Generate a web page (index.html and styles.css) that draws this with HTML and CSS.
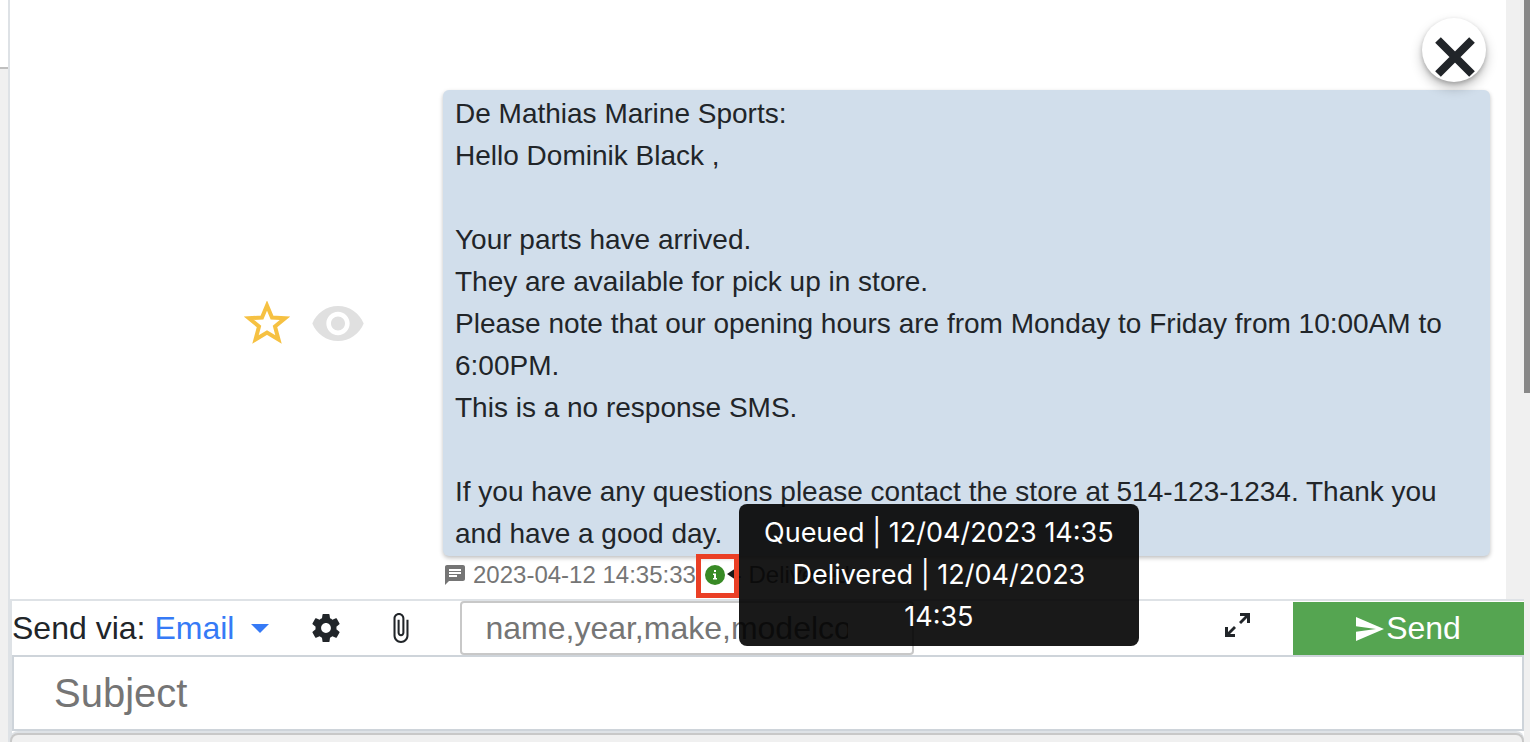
FILE: index.html
```html
<!doctype html>
<html lang="en">
<head>
  <meta charset="UTF-8">
  <meta name="viewport" content="width=device-width, initial-scale=1.0">
  <title>Messages</title>
  <link rel="stylesheet" href="styles.css">
</head>
<body>
  <div class="app">
    <aside class="rail">
      <div class="rail-top"></div>
    </aside>

    <main class="main">
      <section class="thread">
        <div class="messages">
          <div class="message">
            <div class="message-actions">
              <button class="icon-btn" type="button" aria-label="Star message">
                <svg class="icon-star" viewBox="0 1 46 44" width="46" height="44">
                  <path d="M23 5.500 L28 17.500 L41 18.200 L31 26.500 L34.500 39.500 L23 32.500 L11.500 39.500 L15 26.500 L5 18.200 L18 17.500 Z"/>
                </svg>
              </button>
              <button class="icon-btn" type="button" aria-label="Mark as unread">
                <svg class="icon-eye" viewBox="1 4.500 22 15" width="52" height="35">
                  <path d="M12 4.500C7 4.500 2.730 7.610 1 12c1.730 4.390 6 7.500 11 7.500s9.270-3.110 11-7.500c-1.730-4.390-6-7.500-11-7.500zM12 17c-2.760 0-5-2.240-5-5s2.240-5 5-5 5 2.240 5 5-2.240 5-5 5zm0-8c-1.660 0-3 1.340-3 3s1.340 3 3 3 3-1.340 3-3-1.340-3-3-3z"/>
                </svg>
              </button>
            </div>
            <p class="bubble">De Mathias Marine Sports:<br>
              Hello Dominik Black ,<br>
              <br>
              Your parts have arrived.<br>
              They are available for pick up in store.<br>
              Please note that our opening hours are from Monday to Friday from 10:00AM to 6:00PM.<br>
              This is a no response SMS.<br>
              <br>
              If you have any questions please contact the store at 514-123-1234. Thank you and have a good day.</p>
          </div>
          <div class="meta">
            <svg class="icon-sms" viewBox="2 2 20 20" width="20" height="20">
              <path d="M20 2H4c-1.100 0-2 .9-2 2v18l4-4h14c1.100 0 2-.9 2-2V4c0-1.100-.9-2-2-2zM6 6v2h12V6zM6 9v2h12V9zM6 12v2h8v-2z" fill-rule="evenodd"/>
            </svg>
            <time>2023-04-12 14:35:33</time>
            <span class="status">
              <svg viewBox="0 0 20 20" width="20" height="20">
                <circle cx="10" cy="10" r="10" fill="#388a25"/>
                <path d="M9 5h2v2H9zM8 8.500h3V13h1v1.500H8V13h1v-3H8z" fill="#fff"/>
              </svg>
              <span class="tooltip" role="tooltip">Queued | 12/04/2023 14:35<br>Delivered | 12/04/2023 14:35</span>
            </span>
            <span class="state">- Delivered</span>
          </div>
        </div>
        <div class="thread-track"></div>
        <button class="close" type="button" aria-label="Close">
          <svg viewBox="0 0 40 40" width="40" height="40">
            <path d="M3 3 L37 37 M37 3 L3 37"/>
          </svg>
        </button>
      </section>

      <form class="composer">
        <div class="toolbar">
          <span class="send-via">Send via:</span>
          <button class="channel" type="button">Email</button>
          <button class="icon-btn settings" type="button" aria-label="Settings">
            <svg viewBox="2 2 20 20" width="28" height="28">
              <path d="M19.430 12.980c.04-.32.07-.64.07-.98s-.03-.66-.07-.98l2.110-1.650c.19-.15.24-.42.12-.64l-2-3.460c-.12-.22-.39-.3-.61-.22l-2.490 1c-.52-.4-1.080-.73-1.690-.98l-.38-2.650C14.460 2.180 14.250 2 14 2h-4c-.25 0-.46.18-.49.42l-.38 2.650c-.61.25-1.170.59-1.690.98l-2.490-1c-.23-.09-.49 0-.61.22l-2 3.460c-.13.22-.07.49.12.64l2.110 1.650c-.04.32-.07.65-.07.98s.03.66.07.98l-2.110 1.650c-.19.15-.24.42-.12.64l2 3.460c.12.22.39.3.61.22l2.490-1c.52.4 1.080.73 1.690.98l.38 2.650c.03.24.24.42.49.42h4c.25 0 .46-.18.49-.42l.38-2.650c.61-.25 1.170-.59 1.690-.98l2.490 1c.23.09.49 0 .61-.22l2-3.460c.12-.22.07-.49-.12-.64l-2.110-1.650zM12 15.500c-1.930 0-3.500-1.570-3.500-3.500s1.570-3.500 3.500-3.500 3.500 1.570 3.500 3.500-1.570 3.500-3.500 3.500z"/>
            </svg>
          </button>
          <button class="icon-btn attach" type="button" aria-label="Attach file">
            <svg viewBox="7 1 11 22" width="16" height="30">
              <path d="M16.500 6v11.500c0 2.210-1.790 4-4 4s-4-1.790-4-4V5c0-1.380 1.120-2.500 2.500-2.500s2.500 1.120 2.500 2.500v10.500c0 .55-.45 1-1 1s-1-.45-1-1V6H10v9.500c0 1.380 1.120 2.500 2.500 2.500s2.500-1.120 2.500-2.500V5c0-2.210-1.790-4-4-4S7 2.790 7 5v12.500c0 3.040 2.460 5.500 5.500 5.500s5.500-2.460 5.500-5.500V6h-1.500z"/>
            </svg>
          </button>
          <input class="search" type="text" placeholder="name,year,make,modelcode" aria-label="Search unit">
          <button class="icon-btn expand" type="button" aria-label="Expand">
            <svg viewBox="0 0 25 24" width="25" height="24">
              <path d="M15 0h10v10h-3V5l-6 6-2-2 6-6h-5zM10 24H0V14h3v5l6-6 2 2-6 6h5z"/>
            </svg>
          </button>
          <button class="send" type="submit">
            <svg viewBox="2 3 21 18" width="28" height="24">
              <path d="M2 21l21-9L2 3v7l15 2-15 2z"/>
            </svg>
            <span>Send</span>
          </button>
        </div>
        <input class="subject" type="text" placeholder="Subject" aria-label="Subject">
        <div class="editor"></div>
      </form>
    </main>

    <div class="page-track">
      <div class="page-thumb"></div>
    </div>
  </div>
</body>
</html>
```

FILE: styles.css
```css
*,
*::before,
*::after {
    box-sizing: border-box;
}

body {
    margin: 0;
    background: #f0f0f0;
    color: #212529;
    font-family: "Liberation Sans", Arial, sans-serif;
    font-size: 28px;
}

button,
input {
    font-family: inherit;
    color: inherit;
    margin: 0;
}

button {
    border: none;
    background: none;
    padding: 0;
    cursor: pointer;
}

svg {
    display: block;
    fill: currentColor;
    flex-shrink: 0;
}

.app {
    display: flex;
    height: 100vh;
    overflow: hidden;
}

.rail {
    width: 10px;
    border-right: 2px solid #dee2e6;
}

.rail-top {
    height: 69px;
    background: #fff;
    border-bottom: 2px solid #bfbfbf;
}

.main {
    flex: 1;
    min-width: 0;
    display: flex;
    flex-direction: column;
}

/* Thread */
.thread {
    flex: 1;
    display: flex;
    position: relative;
    background: #fff;
}

.messages {
    flex: 1;
    padding: 90px 16px 0 0;
}

.thread-track {
    width: 18px;
    background: #f0f0f0;
}

.message {
    display: flex;
    justify-content: flex-end;
    align-items: center;
}

.message-actions {
    display: flex;
    align-items: center;
    gap: 22px;
    margin-right: 79px;
}

.icon-btn {
    display: flex;
    align-items: center;
    justify-content: center;
}

.icon-star {
    fill: none;
    stroke: #f6c142;
    stroke-width: 4;
}

.icon-eye {
    color: #e0e0e0;
}

.bubble {
    width: 1047px;
    max-width: 71%;
    margin: 0;
    padding: 3px 12px 1px;
    line-height: 42px;
    background: #d1deeb;
    border-radius: 6px;
    box-shadow: 0 2px 4px rgba(0, 0, 0, 0.25);
}

.meta {
    display: flex;
    align-items: center;
    width: 1047px;
    max-width: 71%;
    height: 38px;
    margin-left: auto;
    padding-left: 2px;
    color: #757575;
    font-size: 24px;
    white-space: nowrap;
}

.icon-sms {
    margin-right: 8px;
}

.status {
    position: relative;
    display: flex;
    margin: 0 9px;
}

/* highlight around the status icon */
.status::before {
    content: "";
    position: absolute;
    top: -11px;
    left: -9px;
    width: 43px;
    height: 44px;
    border: 5px solid #ea3f25;
    z-index: 3;
}

.tooltip {
    position: absolute;
    top: -61px;
    left: 34px;
    width: 400px;
    padding: 8px 20px;
    border-radius: 8px;
    background: rgba(0, 0, 0, 0.9);
    color: #fff;
    font-family: Inter, sans-serif;
    font-size: 27px;
    line-height: 42px;
    text-align: center;
    white-space: normal;
    z-index: 2;
}

.tooltip::before {
    content: "";
    position: absolute;
    top: 62px;
    right: 100%;
    border: 8px solid transparent;
    border-left-width: 0;
    border-right: 12px solid rgba(0, 0, 0, 0.9);
}

.close {
    position: absolute;
    top: 18px;
    right: 38px;
    width: 64px;
    height: 64px;
    padding: 14px 0 0 1px;
    display: flex;
    align-items: center;
    justify-content: center;
    border-radius: 50%;
    background: #fff;
    box-shadow: 0 6px 12px rgba(0, 0, 0, 0.25), 0 2px 4px rgba(0, 0, 0, 0.2);
}

.close svg {
    stroke: #212529;
    stroke-width: 8;
}

/* Composer */
.composer {
    border-top: 2px solid #dee2e6;
    border-left: 2px solid #dee2e6;
    background: #fff;
    font-size: 32px;
}

.toolbar {
    display: flex;
    align-items: center;
    height: 54px;
}

.channel {
    display: flex;
    align-items: center;
    gap: 17px;
    margin-left: 9px;
    color: #367af6;
    font-size: 32px;
}

.channel::after {
    content: "";
    border: 9px solid transparent;
    border-top-color: #367af6;
    border-bottom: 0;
}

.settings {
    margin-left: 43px;
}

.attach {
    margin-left: 53px;
}

.search {
    width: 454px;
    height: 54px;
    margin-left: 51px;
    padding: 0 64px 0 23px;
    border: 2px solid #c8c8c8;
    border-radius: 4px;
    background: #fff;
    font-size: 32px;
}

.search::placeholder,
.subject::placeholder {
    color: #757575;
    opacity: 1;
}

.expand {
    margin-left: auto;
    padding-bottom: 6px;
}

.send {
    display: flex;
    align-items: center;
    justify-content: center;
    align-self: flex-end;
    width: 231px;
    height: 53px;
    margin-left: 43px;
    background: #55a551;
    color: #fff;
    font-size: 32px;
}

.send span {
    margin-left: 2px;
}

.subject {
    display: block;
    width: 100%;
    height: 76px;
    padding: 0 40px;
    border: 2px solid #ced4da;
    background: #fff;
    font-size: 40px;
}

.editor {
    height: 9px;
    margin-left: -2px;
    border: 2px solid #c8c8c8;
    border-bottom: 0;
    border-radius: 8px 8px 0 0;
    background: #f0f0f0;
    box-shadow: 0 -2px 0 #dee2e6;
    margin-top: 2px;
}

/* Page scrollbar */
.page-track {
    width: 6px;
    background: #f0f0f0;
}

.page-thumb {
    height: 53vh;
    background: #888;
}
```
